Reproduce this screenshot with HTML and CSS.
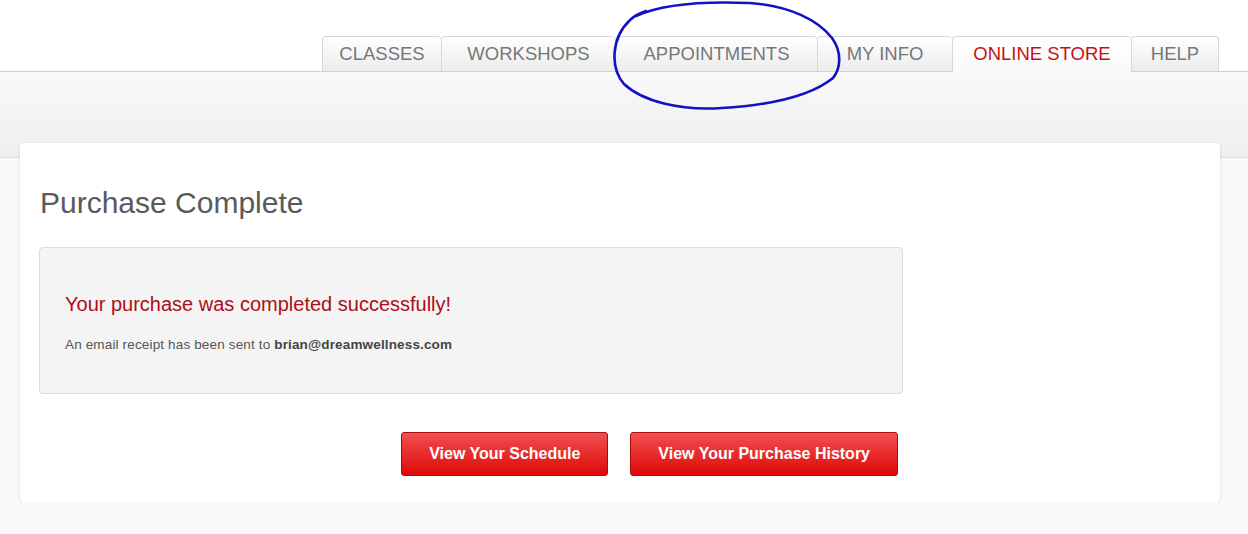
FILE: index.html
```html
<!DOCTYPE html>
<html>
<head>
    <title>Purchase Complete</title>
    <link rel="stylesheet" href="styles.css">
</head>
<body>
    <div class="header">
        <div class="tabs">
            <a class="tab">CLASSES</a>
            <a class="tab">WORKSHOPS</a>
            <a class="tab">APPOINTMENTS</a>
            <a class="tab">MY INFO</a>
            <a class="tab active">ONLINE STORE</a>
            <a class="tab">HELP</a>
        </div>
    </div>
    <div class="band"></div>
    <div class="card">
        <h1>Purchase Complete</h1>
        <div class="message">
            <h2>Your purchase was completed successfully!</h2>
            <p>An email receipt has been sent to <b>brian@dreamwellness.com</b></p>
        </div>
        <div class="actions">
            <a class="button">View Your Schedule</a>
            <a class="button">View Your Purchase History</a>
        </div>
    </div>

    <!-- pen mark around the appointments tab -->
    <svg class="scribble" width="1248" height="534" viewBox="0 0 1248 534">
        <path d="M636,16 C662,4 702,1 750,3 C790,6 818,20 832,38 C842,52 841,68 833,78 C812,95 772,105 722,108 C680,111 642,101 624,84 C610,68 611,38 630,20 C634,16 640,13 646,11" />
    </svg>
</body>
</html>
```

FILE: styles.css
```css
body {
    margin: 0;
    background-color: #f9f9f9;
    font-family: "Liberation Sans", Arial, sans-serif;
    color: #555;
}
.header {
    height: 71px;
    background-color: #fff;
    border-bottom: 1px solid #d0d0d0;
    display: flex;
    justify-content: flex-end;
    align-items: flex-end;
    padding-right: 29px;
}
.tabs {
    display: grid;
    grid-template-columns: 119px 174px 202px 135px 179px 88px;
    align-items: end;
}
.tab {
    box-sizing: border-box;
    height: 35px;
    display: flex;
    align-items: center;
    justify-content: center;
    font-size: 18.5px;
    color: #777;
    background: linear-gradient(#ffffff, #ececec);
    border-top: 1px solid #d8d8d8;
    border-left: 1px solid #d8d8d8;
    border-radius: 4px 4px 0 0;
}
.tab:last-child {
    border-right: 1px solid #d8d8d8;
}
.tab.active {
    height: 36px;
    margin-bottom: -1px;
    padding-bottom: 1px;
    color: #c80f14;
    background: linear-gradient(#ffffff, #f9f9f9);
    position: relative;
}
.band {
    height: 85px;
    background: linear-gradient(#f9f9f9, #efefef);
    border-bottom: 1px solid #e2e2e2;
}
.card {
    width: 1200px;
    box-sizing: border-box;
    margin: -15px 0 0 20px;
    padding: 42px 20px 26px 19px;
    background-color: #fff;
    border-radius: 4px;
    box-shadow: 0 1px 3px rgba(0, 0, 0, 0.14);
    position: relative;
}
h1 {
    margin: 0 0 26px 1px;
    font-size: 30px;
    line-height: 36px;
    font-weight: normal;
    color: #5a5a5a;
}
.message {
    width: 864px;
    box-sizing: border-box;
    padding: 44px 25px 40px;
    background-color: #f4f4f4;
    border: 1px solid #dcdcdc;
    border-radius: 4px;
}
.message h2 {
    margin: 0 0 21px;
    font-size: 20px;
    line-height: 24px;
    font-weight: normal;
    color: #ab0f17;
}
.message p {
    margin: 0;
    font-size: 13.5px;
    letter-spacing: 0.15px;
    line-height: 16px;
    color: #555;
}
.message b {
    color: #444;
}
.actions {
    width: 859px;
    margin-top: 38px;
    display: flex;
    justify-content: flex-end;
    gap: 22px;
}
.button {
    box-sizing: border-box;
    height: 44px;
    padding: 0 27px;
    display: flex;
    align-items: center;
    font-size: 16px;
    font-weight: bold;
    color: #fff;
    background: linear-gradient(#f05050, #e00808);
    border: 1px solid #a80d0d;
    border-radius: 3px;
}
.scribble {
    position: absolute;
    top: 0;
    left: 0;
    pointer-events: none;
}
.scribble path {
    fill: none;
    stroke: #1212c4;
    stroke-width: 2.6;
    stroke-linecap: round;
}
```
